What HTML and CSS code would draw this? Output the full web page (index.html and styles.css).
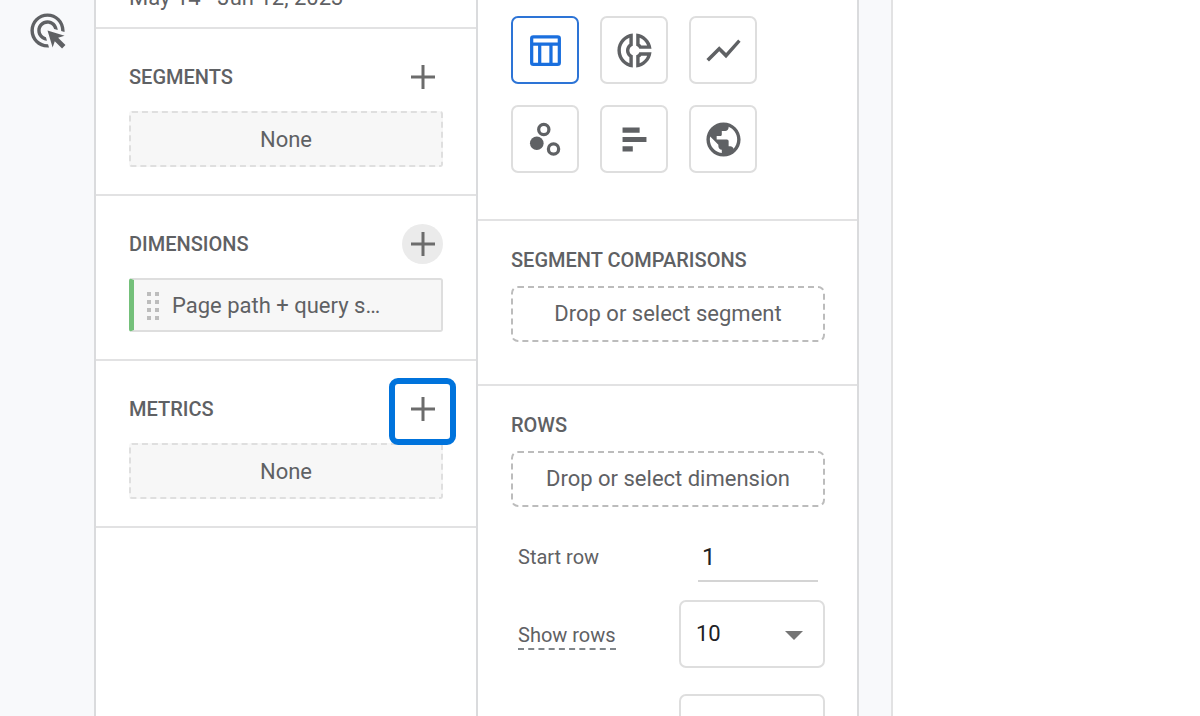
FILE: index.html
```html
<!DOCTYPE html>
<html lang="en">
<head>
<meta charset="utf-8">
<title>Exploration</title>
<link rel="stylesheet" href="styles.css">
</head>
<body>
<div class="app">
  <nav class="rail">
    <button class="rail-button" type="button" aria-label="Advertising">
      <svg class="icon" viewBox="0 0 24 24"><path d="M11.71 17.99C8.53 17.84 6 15.22 6 12c0-3.31 2.69-6 6-6 3.22 0 5.84 2.53 5.99 5.71l-2.1-.63C15.48 9.31 13.89 8 12 8c-2.21 0-4 1.79-4 4 0 1.89 1.31 3.48 3.08 3.89zM22 12c0 .3-.01.6-.04.9l-1.97-.59c.01-.1.01-.21.01-.31 0-4.42-3.58-8-8-8s-8 3.58-8 8 3.58 8 8 8c.1 0 .21 0 .31-.01l.59 1.97c-.3.03-.6.04-.9.04C6.48 22 2 17.52 2 12S6.48 2 12 2s10 4.48 10 10zm-3.77 4.26L22 15l-10-3 3 10 1.26-3.77 4.27 4.27 1.98-1.98z"/></svg>
    </button>
  </nav>

  <aside class="panel">
    <div class="date-range">May 14 - Jun 12, 2023</div>
    <section class="group">
      <div class="group-head">
        <h2 class="title">SEGMENTS</h2>
        <button class="add" type="button" aria-label="Add segment"><svg class="plus" viewBox="0 0 24 24"><path d="M12 0v24M0 12h24"/></svg></button>
      </div>
      <div class="empty">None</div>
    </section>
    <section class="group">
      <div class="group-head">
        <h2 class="title">DIMENSIONS</h2>
        <button class="add add-hover" type="button" aria-label="Add dimension"><svg class="plus" viewBox="0 0 24 24"><path d="M12 0v24M0 12h24"/></svg></button>
      </div>
      <div class="chip">
        <svg class="grip" viewBox="0 0 12 28"><path d="M0 0h4v4H0zM8 0h4v4H8zM0 8h4v4H0zM8 8h4v4H8zM0 16h4v4H0zM8 16h4v4H8zM0 24h4v4H0zM8 24h4v4H8z"/></svg>
        <span>Page path + query s…</span>
      </div>
    </section>
    <section class="group">
      <div class="group-head">
        <h2 class="title">METRICS</h2>
        <button class="add add-marked" type="button" aria-label="Add metric"><svg class="plus" viewBox="0 0 24 24"><path d="M12 0v24M0 12h24"/></svg></button>
      </div>
      <div class="empty">None</div>
    </section>
  </aside>

  <aside class="panel panel-last">
    <section class="techniques">
      <button class="tile tile-on" type="button" aria-label="Free form"><svg class="icon" viewBox="0 0 24 24"><path class="line" d="M4.9 4h14.2a1 1 0 0 1 1 1v14.1a1 1 0 0 1-1 1H4.900a1 1 0 0 1-1-1V5a1 1 0 0 1 1-1zM4 8.300h16M8.600 8.300v11.700M15.200 8.300v11.700"/></svg></button>
      <button class="tile" type="button" aria-label="Donut chart"><svg class="icon" viewBox="0 0 24 24"><path d="M14.82 11h7.13c-.47-4.72-4.23-8.48-8.95-8.95v7.13c.85.31 1.51.97 1.82 1.82zM15 4.58C17 5.4 18.6 7 19.42 9h-3.43c-.28-.37-.62-.71-.99-.99V4.58zM2 12c0 5.19 3.95 9.45 9 9.95v-7.13C9.84 14.4 9 13.3 9 12c0-1.3.84-2.4 2-2.82V2.05c-5.05.5-9 4.76-9 9.950zm7-7.42v3.44c-1.23.92-2 2.39-2 3.98 0 1.590.77 3.060 2 3.990v3.440C6.040 18.240 4 15.350 4 12c0-3.350 2.040-6.240 5-7.420zm4 10.240v7.130c4.720-.47 8.480-4.230 8.950-8.950h-7.130c-.31.85-.97 1.510-1.820 1.820zm2 1.170c.37-.28.71-.61.99-.99h3.430C18.600 17 17 18.600 15 19.420v-3.430z"/></svg></button>
      <button class="tile" type="button" aria-label="Line chart"><svg class="icon" viewBox="0 0 24 24"><path d="M3.500 18.490l6-6.010 4 4L22 6.920l-1.410-1.410-7.090 7.970-4-4L2 16.990z"/></svg></button>
      <button class="tile" type="button" aria-label="Scatterplot"><svg class="icon" viewBox="0 0 24 24"><circle cx="6.900" cy="14.200" r="4"/><circle class="line" cx="11" cy="6.100" r="3"/><circle class="line" cx="16.700" cy="17.600" r="3"/></svg></button>
      <button class="tile" type="button" aria-label="Bar chart"><svg class="icon" viewBox="0 0 24 24"><path d="M5 5h10v3H5zM5 10.500h14v3H5zM5 16h6v3H5z"/></svg></button>
      <button class="tile" type="button" aria-label="Geo map"><svg class="icon" viewBox="0 0 24 24"><path d="M12 2C6.480 2 2 6.480 2 12s4.480 10 10 10 10-4.480 10-10S17.520 2 12 2zm-1 17.930c-3.950-.49-7-3.850-7-7.930 0-.62.08-1.210.21-1.790L9 15v1c0 1.100.9 2 2 2v1.930zm6.900-2.540c-.26-.81-1-1.390-1.900-1.390h-1v-3c0-.55-.45-1-1-1H8v-2h2c.55 0 1-.45 1-1V7h2c1.100 0 2-.9 2-2v-.41c2.930 1.190 5 4.060 5 7.410 0 2.080-.8 3.970-2.100 5.390z"/></svg></button>
    </section>
    <section class="setting">
      <h2 class="title">SEGMENT COMPARISONS</h2>
      <button class="drop" type="button">Drop or select segment</button>
    </section>
    <section class="setting setting-rows">
      <h2 class="title">ROWS</h2>
      <button class="drop" type="button">Drop or select dimension</button>
      <div class="field field-start">
        <label for="start-row">Start row</label>
        <input id="start-row" class="number" type="text" inputmode="numeric" value="1">
      </div>
      <div class="field">
        <label for="show-rows" class="hint">Show rows</label>
        <div class="picker">
          <select id="show-rows" class="select"><option>10</option><option>25</option><option>50</option></select>
          <svg class="caret" viewBox="0 0 18 9"><path d="M0 0h18l-9 9z"/></svg>
        </div>
      </div>
      <div class="field">
        <span></span>
        <div class="picker">
          <select class="select" aria-label="Nested rows"><option></option><option>No</option><option>Yes</option></select>
          <svg class="caret" viewBox="0 0 18 9"><path d="M0 0h18l-9 9z"/></svg>
        </div>
      </div>
    </section>
  </aside>

  <main class="canvas"></main>
</div>
</body>
</html>
```

FILE: styles.css
```css
*, *::after { box-sizing: border-box; }

body {
  margin: 0;
  background: #f8f9fb;
  color: #5f6164;
  font: 22px/26px Roboto, "Liberation Sans", sans-serif;
}

button, input, select {
  margin: 0;
  padding: 0;
  border: 0;
  background: none;
  color: inherit;
  font: inherit;
}

.app {
  display: grid;
  grid-template-columns: 94px 382px 383px 1fr;
  height: 100vh;
  overflow: hidden;
}

.rail { padding: 10px 0 0 27px; }
.rail-button { display: flex; }

.icon {
  width: 41px;
  height: 41px;
  fill: currentColor;
}

.line {
  fill: none;
  stroke: currentColor;
  stroke-width: 1.9;
}

.panel {
  min-height: 0;
  overflow: hidden;
  background: #fff;
  border-left: 2px solid #dadbdd;
}

.panel-last { border-right: 2px solid #dadbdd; }

.date-range {
  display: flex;
  align-items: flex-end;
  height: 29px;
  padding: 0 33px 16px;
  border-bottom: 2px solid #e2e2e3;
}

.group {
  padding: 28px 33px 27px;
  border-bottom: 2px solid #e2e2e3;
}

.group-head {
  display: flex;
  align-items: center;
  justify-content: space-between;
  margin-bottom: 14px;
}

.title {
  margin: 0;
  font-size: 20px;
  font-weight: 500;
  line-height: 26px;
}

.add {
  position: relative;
  display: grid;
  place-items: center;
  width: 41px;
  height: 40px;
  border-radius: 50%;
}

.add-hover { background: #ebebeb; }

.add-marked::after {
  content: "";
  position: absolute;
  top: -11px;
  left: -13px;
  width: 67px;
  height: 67px;
  border: 6px solid #0073dc;
  border-radius: 9px;
}

.plus {
  width: 24px;
  height: 24px;
  fill: none;
  stroke: #6c6c6c;
  stroke-width: 3;
}

.empty {
  display: grid;
  place-items: center;
  height: 56px;
  padding-top: 2px;
  background: #f7f7f7;
  border: 2px dashed #dfdfdf;
  border-radius: 3px;
}

.chip {
  display: flex;
  align-items: center;
  gap: 13px;
  height: 54px;
  padding: 2px 0 0 13px;
  background: #f7f7f7;
  border: 2px solid #dedede;
  border-left: 5px solid #74c07a;
  border-radius: 3px;
}

.grip {
  width: 12px;
  height: 28px;
  fill: #bdbdbd;
}

.techniques {
  display: grid;
  grid-template-columns: repeat(3, 68px);
  gap: 21px;
  padding: 16px 33px 46px;
  border-bottom: 2px solid #e2e2e3;
}

.tile {
  display: grid;
  place-items: center;
  height: 68px;
  border: 2px solid #dedede;
  border-radius: 7px;
}

.tile-on {
  color: #1a6fde;
  border-color: #2d74d6;
}

.setting {
  padding: 26px 32px 42px 33px;
  border-bottom: 2px solid #e2e2e3;
}

.setting-rows { border-bottom: 0; }

.drop {
  width: 100%;
  height: 56px;
  margin-top: 13px;
  border: 2px dashed #bcbcbc;
  border-radius: 7px;
}

.field {
  display: flex;
  align-items: center;
  justify-content: space-between;
  margin-bottom: 26px;
  padding-left: 7px;
  font-size: 20px;
}

.field-start {
  margin: 25px 0 18px;
  padding-right: 7px;
}

.number {
  width: 120px;
  height: 50px;
  padding: 1px 0 0 4px;
  border-bottom: 2px solid #d4d4d4;
  color: #202124;
  font-size: 24px;
}

.hint {
  padding-top: 4px;
  border-bottom: 2px dashed #80868b;
}

.picker {
  display: grid;
  align-items: center;
  width: 146px;
}

.select {
  grid-area: 1 / 1;
  height: 68px;
  padding-left: 15px;
  border: 2px solid #dedede;
  border-radius: 7px;
  appearance: none;
  color: #202124;
  font-size: 22px;
}

.caret {
  grid-area: 1 / 1;
  justify-self: end;
  width: 18px;
  height: 9px;
  margin: 2px 22px 0 0;
  fill: #757575;
  pointer-events: none;
}

.canvas {
  margin-left: 32px;
  background: #fff;
  border-left: 2px solid #e2e2e3;
}
```
